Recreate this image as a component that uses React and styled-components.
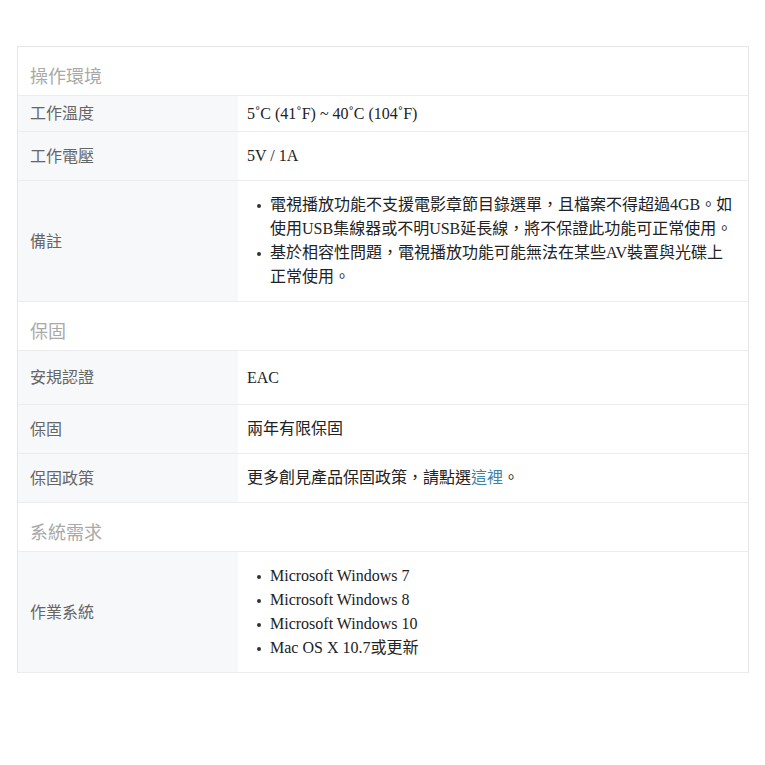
import React from 'react';
import styled, { createGlobalStyle } from 'styled-components';

const GlobalStyle = createGlobalStyle`
  body {
    margin: 0;
    background: #fff;
  }
`;

const Page = styled.div`
  padding: 46px 0 0 17px;
`;

const SpecTable = styled.div`
  width: 732px;
  box-sizing: border-box;
  border: 1px solid #e6e6e6;
  border-bottom: none;
  display: flex;
  flex-direction: column;
`;

const SectionHeader = styled.div`
  height: 48px;
  padding: 0 12px;
  display: flex;
  align-items: flex-end;
  border-bottom: 1px solid #ececec;
  font-family: 'Noto Sans CJK TC', sans-serif;
  font-size: 18px;
  line-height: 26px;
  color: #a9a9a9;

  span {
    margin-bottom: 7px;
  }
`;

const Row = styled.div`
  display: grid;
  grid-template-columns: 220px 1fr;
  min-height: ${(p) => p.$minH || 48}px;
  border-bottom: 1px solid #ececec;
`;

const Label = styled.div`
  background: #f7f8fa;
  padding: 0 12px 3px;
  display: flex;
  align-items: center;
  font-family: 'Noto Sans CJK TC', sans-serif;
  font-size: 16px;
  line-height: 24px;
  color: #666;
`;

const Value = styled.div`
  padding: ${(p) => (p.$list ? '12px' : '0')} 11px ${(p) => (p.$list ? '12px' : '0')} 9px;
  display: flex;
  align-items: center;
  font-family: 'Liberation Serif', 'Noto Sans CJK TC', serif;
  font-size: 16px;
  line-height: 24px;
  color: #222;
`;

const BulletList = styled.ul`
  margin: 0;
  padding: 0 0 0 23px;
  list-style: none;

  li {
    position: relative;
  }

  li::before {
    content: '';
    position: absolute;
    left: -13px;
    top: 11px;
    width: 4px;
    height: 4px;
    border-radius: 50%;
    background: #333;
  }
`;

const Link = styled.a`
  color: #3f84a8;
  text-decoration: none;
`;

const sections = [
  {
    title: '操作環境',
    rows: [
      { label: '工作溫度', value: '5˚C (41˚F) ~ 40˚C (104˚F)', minH: 35 },
      { label: '工作電壓', value: '5V / 1A' },
      {
        label: '備註',
        list: [
          '電視播放功能不支援電影章節目錄選單，且檔案不得超過4GB。如使用USB集線器或不明USB延長線，將不保證此功能可正常使用。',
          '基於相容性問題，電視播放功能可能無法在某些AV裝置與光碟上正常使用。',
        ],
      },
    ],
  },
  {
    title: '保固',
    rows: [
      { label: '安規認證', value: 'EAC', minH: 53 },
      { label: '保固', value: '兩年有限保固' },
      {
        label: '保固政策',
        value: (
          <span>
            更多創見產品保固政策，請點選<Link href="#">這裡</Link>。
          </span>
        ),
      },
    ],
  },
  {
    title: '系統需求',
    rows: [
      {
        label: '作業系統',
        list: [
          'Microsoft Windows 7',
          'Microsoft Windows 8',
          'Microsoft Windows 10',
          'Mac OS X 10.7或更新',
        ],
      },
    ],
  },
];

export default function App() {
  return (
    <Page>
      <GlobalStyle />
      <SpecTable>
        {sections.map((section) => (
          <React.Fragment key={section.title}>
            <SectionHeader>
              <span>{section.title}</span>
            </SectionHeader>
            {section.rows.map((row) => (
              <Row key={row.label} $minH={row.minH}>
                <Label>{row.label}</Label>
                <Value $list={!!row.list}>
                  {row.list ? (
                    <BulletList>
                      {row.list.map((item) => (
                        <li key={item}>{item}</li>
                      ))}
                    </BulletList>
                  ) : (
                    row.value
                  )}
                </Value>
              </Row>
            ))}
          </React.Fragment>
        ))}
      </SpecTable>
    </Page>
  );
}
